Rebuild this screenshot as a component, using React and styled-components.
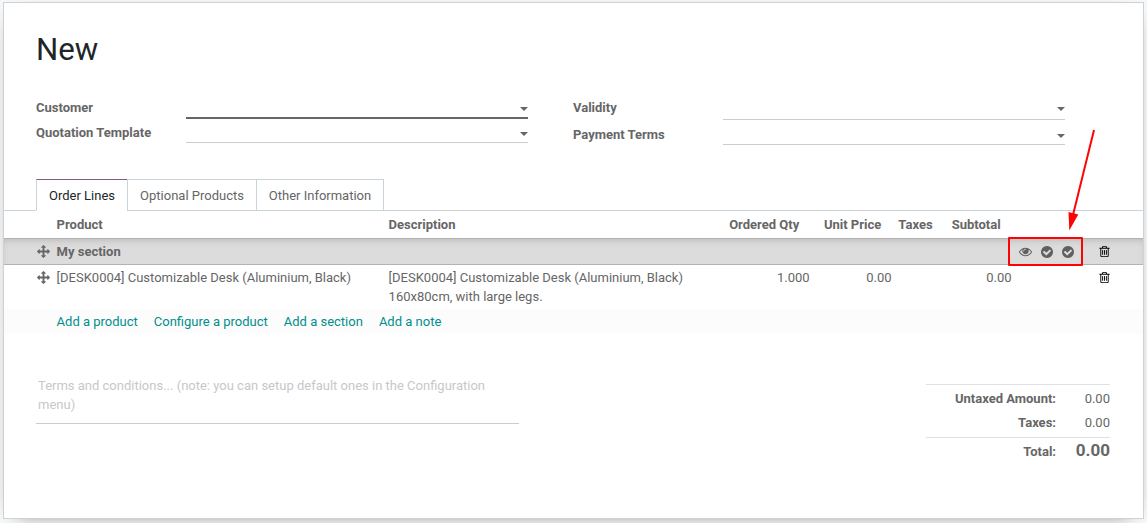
import React from "react";
import styled, { createGlobalStyle } from "styled-components";

const GlobalStyle = createGlobalStyle`
  * { box-sizing: border-box; }
  body {
    margin: 0;
    background: #f7f7f7;
    color: #666;
    font: 13px/19px Roboto, "Liberation Sans", sans-serif;
    overflow: hidden;
  }
`;

const Page = styled.main`
  position: relative;
  height: 523px;
  padding: 2px 3px 4px;
`;

const Sheet = styled.section`
  height: 517px;
  width: 1141px;
  background: #fff;
  border: 1px solid #c8d3da;
  box-shadow: 0 5px 20px -15px #000;
`;

const Title = styled.h1`
  margin: 0;
  padding: 27px 0 0 32px;
  height: 92px;
  color: #212529;
  font-size: 31.2px;
  font-weight: 400;
  line-height: 40px;
`;

const Groups = styled.div`
  display: flex;
  gap: 45px;
  height: 84px;
  padding-left: 32px;
`;

const Group = styled.div`
  width: 492px;
`;

const Field = styled.div`
  display: flex;
  height: ${(p) => p.$height}px;
`;

const Label = styled.label`
  width: 150px;
  padding-top: ${(p) => p.$top || 0}px;
  font-weight: 700;
`;

const Select = styled.div`
  display: flex;
  flex: 1;
  justify-content: flex-end;
  align-items: flex-end;
  padding-bottom: ${(p) => p.$gap}px;
  border-bottom: ${(p) => (p.$focus ? "2px solid #666" : "1px solid #ccc")};
`;

const Caret = styled.i`
  border: 4px solid transparent;
  border-top-color: #666;
  border-bottom: 0;
`;

const Tabs = styled.nav`
  display: flex;
  height: 32px;
  padding-left: 32px;
  border-bottom: 1px solid #c8d3da;
`;

const Tab = styled.a`
  height: 32px;
  width: ${(p) => p.$width}px;
  margin-right: -1px;
  padding-top: 6px;
  text-align: center;
  color: ${(p) => (p.$active ? "#212529" : "#666")};
  border: 1px solid #c8d3da;
  border-top-color: ${(p) => (p.$active ? "#875a7b" : "#c8d3da")};
  border-bottom-color: ${(p) => (p.$active ? "#fff" : "#c8d3da")};
`;

const Row = styled.div`
  display: grid;
  grid-template-columns: 20.6px 332px 311px 110px 82px 52px 68px 86px 1fr;
  padding-left: 32px;
`;

const HeadRow = styled(Row)`
  height: 28px;
  padding-top: 4px;
  font-weight: 700;
  border-bottom: 1px solid #b3b3b3;
`;

const SectionRow = styled(Row)`
  height: 26px;
  padding-top: 3px;
  background: #dcdcdc;
  font-weight: 700;
  border-bottom: 1px solid #b3b3b3;
  box-shadow: inset 0 4px 10px -5px rgba(0, 0, 0, 0.25);
`;

const LineRow = styled(Row)`
  height: 44px;
  padding-top: 3px;
`;

const Cell = styled.div`
  white-space: nowrap;
  text-align: ${(p) => p.$align || "left"};
  padding-right: ${(p) => p.$pad || 0}px;
  grid-column: ${(p) => p.$col || "auto"};
`;

const IconCell = styled(Cell)`
  display: flex;
  align-items: center;
  height: 19px;
  padding-left: ${(p) => p.$inset || 0}px;
  color: ${(p) => p.$color || "#666"};
`;

const ToggleGroup = styled.div`
  grid-column: 8;
  display: flex;
  align-items: center;
  justify-self: start;
  width: 75px;
  height: 29px;
  margin: -5px 0 0 -3.6px;
  padding-left: 9.2px;
  gap: 7.5px;
  color: #606060;
  border: 2px solid #fd0404;
  border-radius: 1px;
`;

const Actions = styled.div`
  display: flex;
  gap: 16px;
  height: 25px;
  padding: 3px 0 0 52.6px;
  background: #fcfcfc;
`;

const Action = styled.a`
  color: #008f8c;
`;

const Footer = styled.div`
  display: flex;
  justify-content: space-between;
  align-items: flex-start;
  padding: 42px 33px 0 32px;
`;

const Terms = styled.div`
  width: 483px;
  height: 48px;
  padding: 0 30px 0 2px;
  color: #c8c8c8;
  border-bottom: 1px solid #ccc;
`;

const Totals = styled.div`
  width: 184px;
  margin-top: 8px;
`;

const TotalRow = styled.div`
  display: grid;
  grid-template-columns: 130px 1fr;
  height: ${(p) => p.$height}px;
  padding-top: ${(p) => p.$top}px;
  text-align: right;
  border-top: ${(p) => (p.$rule ? "1px solid #dee2e6" : "0")};
`;

const GrandTotal = styled.span`
  font-size: 17px;
  font-weight: 700;
  margin-top: -1px;
`;

const Pointer = styled.svg`
  position: absolute;
  left: 1060px;
  top: 125px;
`;

const PATHS = {
  move: "M1792 896q0 26-19 45l-256 256q-19 19-45 19t-45-19-19-45v-128h-384v384h128q26 0 45 19t19 45-19 45l-256 256q-19 19-45 19t-45-19l-256-256q-19-19-19-45t19-45 45-19h128v-384h-384v128q0 26-19 45t-45 19-45-19l-256-256q-19-19-19-45t19-45l256-256q19-19 45-19t45 19 19 45v128h384v-384h-128q-26 0-45-19t-19-45 19-45l256-256q19-19 45-19t45 19l256 256q19 19 19 45t-19 45-45 19h-128v384h384v-128q0-26 19-45t45-19 45 19l256 256q19 19 19 45z",
  eye: "M1664 960q-152-236-381-353 61 104 61 225 0 185-131.5 316.5t-316.5 131.5-316.5-131.5-131.5-316.5q0-121 61-225-229 117-381 353 133 205 333.5 326.5t434.5 121.5 434.5-121.5 333.5-326.5zm-720-384q0-20-14-34t-34-14q-125 0-214.5 89.5t-89.5 214.5q0 20 14 34t34 14 34-14 14-34q0-86 61-147t147-61q20 0 34-14t14-34zm848 384q0 34-20 69-140 230-376.5 368.5t-499.5 138.5-499.5-139-376.5-368q-20-35-20-69t20-69q140-229 376.5-368t499.5-139 499.5 139 376.5 368q20 35 20 69z",
  check: "M1412 734q0-28-18-46l-91-90q-19-19-45-19t-45 19l-408 407-226-226q-19-19-45-19t-45 19l-91 90q-18 18-18 46 0 27 18 45l362 362q19 19 45 19 27 0 46-19l543-543q18-18 18-45zm252 162q0 209-103 385.5t-279.5 279.5-385.5 103-385.5-103-279.5-279.5-103-385.5 103-385.5 279.5-279.5 385.5-103 385.5 103 279.5 279.5 103 385.5z",
  trash: "M704 736v576q0 14-9 23t-23 9h-64q-14 0-23-9t-9-23v-576q0-14 9-23t23-9h64q14 0 23 9t9 23zm256 0v576q0 14-9 23t-23 9h-64q-14 0-23-9t-9-23v-576q0-14 9-23t23-9h64q14 0 23 9t9 23zm256 0v576q0 14-9 23t-23 9h-64q-14 0-23-9t-9-23v-576q0-14 9-23t23-9h64q14 0 23 9t9 23zm128 724v-948h-896v948q0 22 7 40.5t14.5 27 10.5 8.5h832q3 0 10.5-8.5t14.5-27 7-40.5zm-672-1076h448l-48-117q-7-9-17-11h-317q-10 2-17 11zm928 32v64q0 14-9 23t-23 9h-96v948q0 83-47 143.5t-113 60.5h-832q-66 0-113-58.5t-47-141.5v-952h-96q-14 0-23-9t-9-23v-64q0-14 9-23t23-9h309l70-167q15-37 54-63t79-26h320q40 0 79 26t54 63l70 167h309q14 0 23 9t9 23z",
};

const Icon = ({ name, size = 13 }) => (
  <svg width={size} height={size} viewBox="0 0 1792 1792" fill="currentColor">
    <path d={PATHS[name]} />
  </svg>
);

const TrashCell = () => (
  <IconCell $col="9" $color="#000">
    <Icon name="trash" />
  </IconCell>
);

export default function App() {
  return (
    <Page>
      <GlobalStyle />
      <Sheet>
        <Title>New</Title>
        <Groups>
          <Group>
            <Field $height={24}>
              <Label $top={3}>Customer</Label>
              <Select $focus $gap={6}><Caret /></Select>
            </Field>
            <Field $height={24}>
              <Label $top={4}>Quotation Template</Label>
              <Select $gap={6}><Caret /></Select>
            </Field>
          </Group>
          <Group>
            <Field $height={25}>
              <Label $top={3}>Validity</Label>
              <Select $gap={8}><Caret /></Select>
            </Field>
            <Field $height={25}>
              <Label $top={5}>Payment Terms</Label>
              <Select $gap={6}><Caret /></Select>
            </Field>
          </Group>
        </Groups>
        <Tabs>
          <Tab $active $width={92}>Order Lines</Tab>
          <Tab $width={130}>Optional Products</Tab>
          <Tab $width={128}>Other Information</Tab>
        </Tabs>
        <HeadRow>
          <Cell $col="2">Product</Cell>
          <Cell>Description</Cell>
          <Cell $align="right" $pad={10.4}>Ordered Qty</Cell>
          <Cell $align="right" $pad={10.4}>Unit Price</Cell>
          <Cell $align="right" $pad={11}>Taxes</Cell>
          <Cell $align="right" $pad={11}>Subtotal</Cell>
        </HeadRow>
        <SectionRow>
          <IconCell $inset={0.5}><Icon name="move" /></IconCell>
          <Cell>My section</Cell>
          <ToggleGroup>
            <Icon name="eye" />
            <Icon name="check" size={14} />
            <Icon name="check" size={14} />
          </ToggleGroup>
          <TrashCell />
        </SectionRow>
        <LineRow>
          <IconCell $inset={0.5}><Icon name="move" /></IconCell>
          <Cell>[DESK0004] Customizable Desk (Aluminium, Black)</Cell>
          <Cell>
            [DESK0004] Customizable Desk (Aluminium, Black)
            <br />
            160x80cm, with large legs.
          </Cell>
          <Cell $align="right">1.000</Cell>
          <Cell $align="right">0.00</Cell>
          <Cell $col="7" $align="right">0.00</Cell>
          <TrashCell />
        </LineRow>
        <Actions>
          <Action>Add a product</Action>
          <Action>Configure a product</Action>
          <Action>Add a section</Action>
          <Action>Add a note</Action>
        </Actions>
        <Footer>
          <Terms>Terms and conditions... (note: you can setup default ones in the Configuration menu)</Terms>
          <Totals>
            <TotalRow $rule $height={29} $top={4}>
              <b>Untaxed Amount:</b>
              <span>0.00</span>
            </TotalRow>
            <TotalRow $height={24} $top={0}>
              <b>Taxes:</b>
              <span>0.00</span>
            </TotalRow>
            <TotalRow $rule $height={30} $top={4}>
              <b>Total:</b>
              <GrandTotal>0.00</GrandTotal>
            </TotalRow>
          </Totals>
        </Footer>
      </Sheet>
      <Pointer width="40" height="110" viewBox="0 0 40 110">
        <path d="M34 5 13 90" stroke="#fd0404" strokeWidth="2" />
        <path d="M9.300 105.500 8.500 87 18.300 89.500Z" fill="#fd0404" />
      </Pointer>
    </Page>
  );
}
